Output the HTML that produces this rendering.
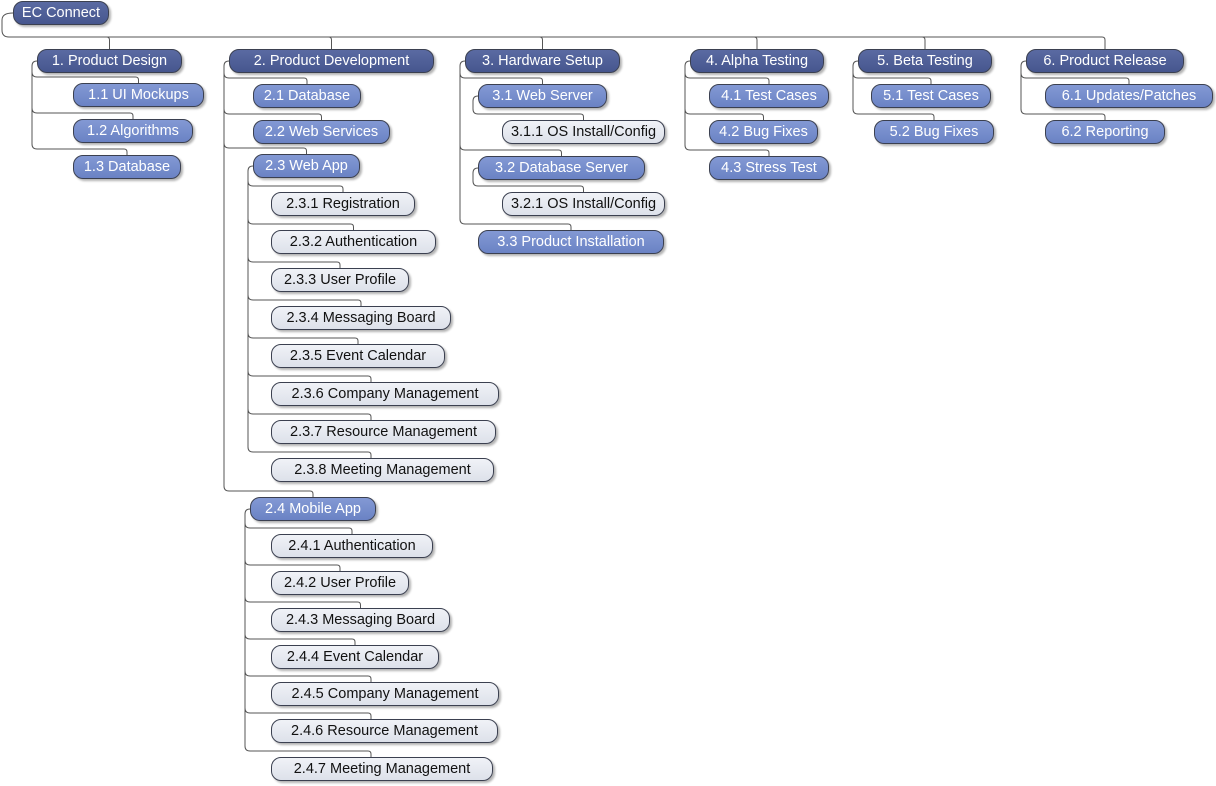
<!DOCTYPE html>
<html><head><meta charset="utf-8"><style>
body{margin:0;width:1216px;height:786px;background:#fff;position:relative;overflow:hidden;font-family:"Liberation Sans",sans-serif}
.n{position:absolute;height:24px;line-height:22px;border-radius:10px;font-size:14.5px;text-align:center;box-sizing:border-box;border:1px solid #3b4050;box-shadow:2px 2px 2px rgba(0,0,0,.3);white-space:nowrap;z-index:2}
.d{background:linear-gradient(#5a6aa2,#46568e);color:#fff}
.m{background:linear-gradient(#8399d4,#6a82c4);color:#fff}
.l{background:linear-gradient(#f0f2f7,#dde1ea);color:#111}
svg{position:absolute;left:0;top:0;z-index:1}
</style></head><body>
<svg id="s" width="1216" height="786"></svg>
<div class="n d" id="r" style="left:13px;top:1px;width:96px">EC Connect</div>
<div class="n d" id="a" style="left:37px;top:49px;width:145px">1. Product Design</div>
<div class="n d" id="b" style="left:229px;top:49px;width:205px">2. Product Development</div>
<div class="n d" id="c" style="left:465px;top:49px;width:155px">3. Hardware Setup</div>
<div class="n d" id="dd" style="left:690px;top:49px;width:134px">4. Alpha Testing</div>
<div class="n d" id="e" style="left:858px;top:49px;width:134px">5. Beta Testing</div>
<div class="n d" id="f" style="left:1026px;top:49px;width:158px">6. Product Release</div>
<div class="n m" id="a1" style="left:73px;top:83px;width:131px">1.1 UI Mockups</div>
<div class="n m" id="a2" style="left:73px;top:119px;width:120px">1.2 Algorithms</div>
<div class="n m" id="a3" style="left:73px;top:155px;width:108px">1.3 Database</div>
<div class="n m" id="b1" style="left:253px;top:84px;width:108px">2.1 Database</div>
<div class="n m" id="b2" style="left:253px;top:120px;width:137px">2.2 Web Services</div>
<div class="n m" id="b3" style="left:253px;top:154px;width:107px">2.3 Web App</div>
<div class="n l" id="c31" style="left:271px;top:192px;width:144px">2.3.1 Registration</div>
<div class="n l" id="c32" style="left:271px;top:230px;width:165px">2.3.2 Authentication</div>
<div class="n l" id="c33" style="left:271px;top:268px;width:138px">2.3.3 User Profile</div>
<div class="n l" id="c34" style="left:271px;top:306px;width:180px">2.3.4 Messaging Board</div>
<div class="n l" id="c35" style="left:271px;top:344px;width:174px">2.3.5 Event Calendar</div>
<div class="n l" id="c36" style="left:271px;top:382px;width:228px">2.3.6 Company Management</div>
<div class="n l" id="c37" style="left:271px;top:420px;width:225px">2.3.7 Resource Management</div>
<div class="n l" id="c38" style="left:271px;top:458px;width:223px">2.3.8 Meeting Management</div>
<div class="n m" id="b4" style="left:250px;top:497px;width:126px">2.4 Mobile App</div>
<div class="n l" id="c41" style="left:271px;top:534px;width:162px">2.4.1 Authentication</div>
<div class="n l" id="c42" style="left:271px;top:571px;width:138px">2.4.2 User Profile</div>
<div class="n l" id="c43" style="left:271px;top:608px;width:179px">2.4.3 Messaging Board</div>
<div class="n l" id="c44" style="left:271px;top:645px;width:168px">2.4.4 Event Calendar</div>
<div class="n l" id="c45" style="left:271px;top:682px;width:228px">2.4.5 Company Management</div>
<div class="n l" id="c46" style="left:271px;top:719px;width:227px">2.4.6 Resource Management</div>
<div class="n l" id="c47" style="left:271px;top:757px;width:222px">2.4.7 Meeting Management</div>
<div class="n m" id="h1" style="left:478px;top:84px;width:129px">3.1 Web Server</div>
<div class="n l" id="h11" style="left:502px;top:120px;width:163px">3.1.1 OS Install/Config</div>
<div class="n m" id="h2" style="left:478px;top:156px;width:167px">3.2 Database Server</div>
<div class="n l" id="h21" style="left:502px;top:192px;width:163px">3.2.1 OS Install/Config</div>
<div class="n m" id="h3" style="left:478px;top:230px;width:186px">3.3 Product Installation</div>
<div class="n m" id="d1" style="left:709px;top:84px;width:120px">4.1 Test Cases</div>
<div class="n m" id="d2" style="left:709px;top:120px;width:109px">4.2 Bug Fixes</div>
<div class="n m" id="d3" style="left:709px;top:156px;width:120px">4.3 Stress Test</div>
<div class="n m" id="e1" style="left:871px;top:84px;width:120px">5.1 Test Cases</div>
<div class="n m" id="e2" style="left:874px;top:120px;width:120px">5.2 Bug Fixes</div>
<div class="n m" id="f1" style="left:1045px;top:84px;width:168px">6.1 Updates/Patches</div>
<div class="n m" id="f2" style="left:1045px;top:120px;width:120px">6.2 Reporting</div>
<script>
var T=[["a",["a1","a2","a3"]],["b",["b1","b2","b3","b4"]],["b3",["c31","c32","c33","c34","c35","c36","c37","c38"]],["b4",["c41","c42","c43","c44","c45","c46","c47"]],["c",["h1","h2","h3"]],["h1",["h11"]],["h2",["h21"]],["dd",["d1","d2","d3"]],["e",["e1","e2"]],["f",["f1","f2"]]];
function g(i){var e=document.getElementById(i);return{x:e.offsetLeft,y:e.offsetTop,w:e.offsetWidth,h:e.offsetHeight}}
var d="";
T.forEach(function(t){var p=g(t[0]);var vx=p.x-5,py=p.y+p.h/2;
t[1].forEach(function(c){var q=g(c);var hy=q.y-6,cx=q.x+Math.min(q.w/2,100);
d+="M"+p.x+" "+py+"Q"+vx+" "+py+" "+vx+" "+(py+5)+"L"+vx+" "+(hy-5)+"Q"+vx+" "+hy+" "+(vx+5)+" "+hy+"L"+(cx-3)+" "+hy+"Q"+cx+" "+hy+" "+cx+" "+(hy+3)+"L"+cx+" "+q.y;});});
var r=g("r");var ry=37;
d+="M"+r.x+" 13Q2 13 2 20L2 30Q2 "+ry+" 9 "+ry+"L1102 "+ry;
["a","b","c","dd","e","f"].forEach(function(c){var q=g(c);var cx=q.x+q.w/2;d+="M"+(cx-3)+" "+ry+"Q"+cx+" "+ry+" "+cx+" "+(ry+3)+"L"+cx+" "+q.y;});
document.getElementById("s").innerHTML='<path d="'+d+'" fill="none" stroke="#555" stroke-width="1"/>';
</script>
</body></html>
